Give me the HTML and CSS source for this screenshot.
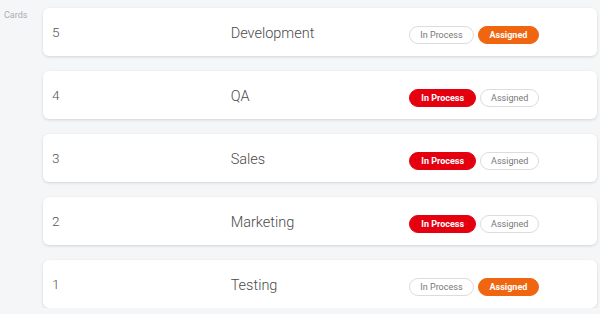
FILE: index.html
```html
<!DOCTYPE html>
<html>
<head>
<meta charset="utf-8">
<link rel="stylesheet" href="styles.css">
</head>
<body>
<div class="page">
  <div class="label">Cards</div>
  <div class="list">
    <div class="card">
      <div class="num">5</div>
      <div class="title">Development</div>
      <div class="badges"><span class="badge">In Process</span><span class="badge orange">Assigned</span></div>
    </div>
    <div class="card">
      <div class="num">4</div>
      <div class="title">QA</div>
      <div class="badges"><span class="badge red">In Process</span><span class="badge">Assigned</span></div>
    </div>
    <div class="card">
      <div class="num">3</div>
      <div class="title">Sales</div>
      <div class="badges"><span class="badge red">In Process</span><span class="badge">Assigned</span></div>
    </div>
    <div class="card">
      <div class="num">2</div>
      <div class="title">Marketing</div>
      <div class="badges"><span class="badge red">In Process</span><span class="badge">Assigned</span></div>
    </div>
    <div class="card">
      <div class="num">1</div>
      <div class="title">Testing</div>
      <div class="badges"><span class="badge">In Process</span><span class="badge orange">Assigned</span></div>
    </div>
  </div>
</div>
</body>
</html>
```
FILE: styles.css
```css
html, body {
  margin: 0;
  padding: 0;
  background: #f5f6f8;
  font-family: Roboto, "Liberation Sans", sans-serif;
}
.page {
  display: flex;
  padding: 8px 3px 0 0;
}
.label {
  width: 43px;
  flex: none;
  box-sizing: border-box;
  padding: 2px 0 0 4px;
  font-size: 9px;
  color: #a9adb3;
}
.list {
  flex: 1;
  display: flex;
  flex-direction: column;
  gap: 15px;
}
.card {
  height: 48px;
  box-sizing: border-box;
  background: #fff;
  border-radius: 6px;
  box-shadow: 0 1px 3px rgba(0,0,0,0.14);
  display: grid;
  grid-template-columns: 1fr 1fr 1fr;
  align-items: center;
  padding: 0 9px;
}
.num {
  font-size: 13.5px;
  color: #555;
  font-weight: 300;
}
.title {
  font-size: 14.5px;
  color: #4a4a4a;
  font-weight: 300;
  padding-top: 2px;
}
.badges {
  display: flex;
  gap: 4px;
  padding-top: 6px;
}
.badge {
  height: 18px;
  box-sizing: border-box;
  border: 1px solid #dcdcdc;
  border-radius: 9px;
  padding: 0 10px;
  font-size: 9px;
  line-height: 16px;
  color: #777;
  background: #fff;
}
.badge.orange {
  background: #ef6510;
  border-color: #ef6510;
  color: #fff;
  font-weight: 700;
  padding: 0 11px;
}
.badge.red {
  background: #e4000f;
  border-color: #e4000f;
  color: #fff;
  font-weight: 700;
  padding: 0 11px;
}
```
